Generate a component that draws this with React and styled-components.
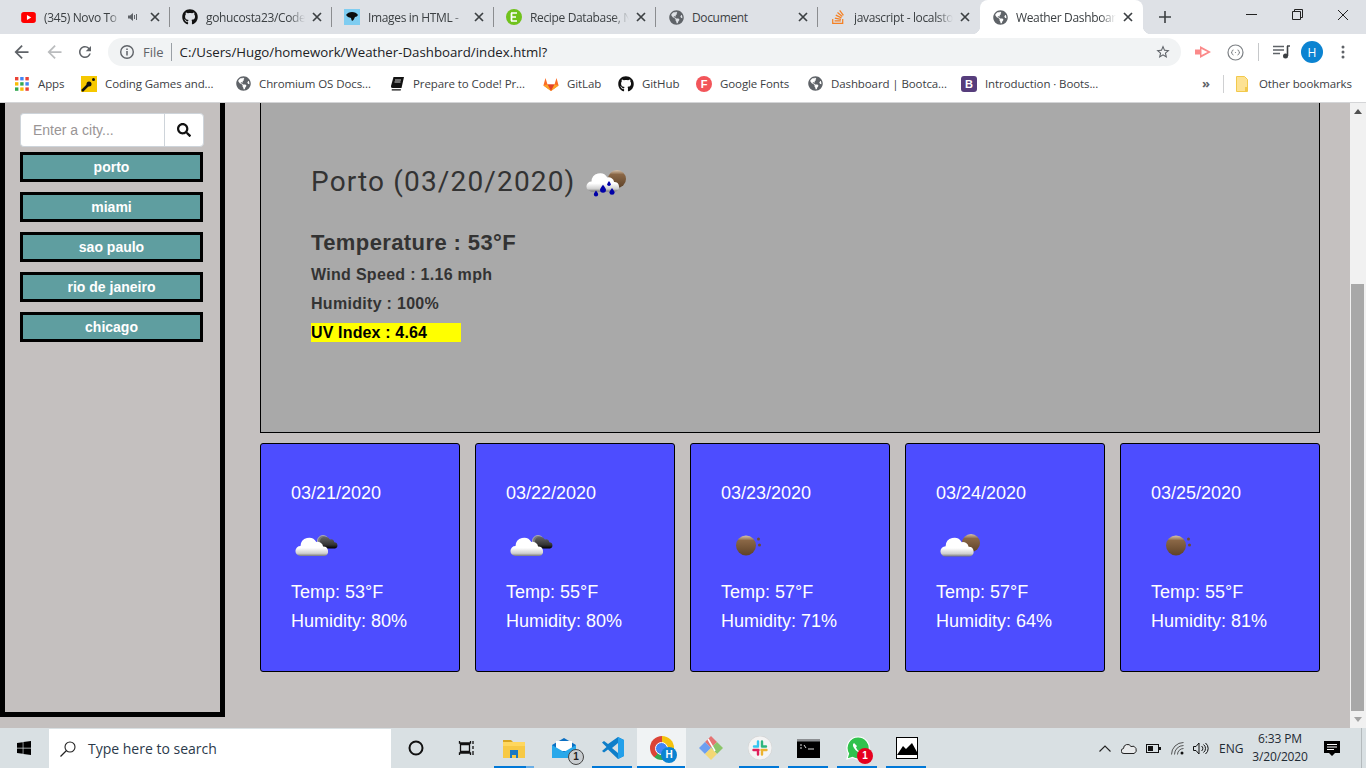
import React from 'react';
import styled, { createGlobalStyle } from 'styled-components';
import { FaGithub, FaStackOverflow, FaGlobeAmericas, FaSearch, FaWindows } from 'react-icons/fa';

const GlobalStyle = createGlobalStyle`
  html, body {
    margin: 0;
    padding: 0;
    overflow: hidden;
  }
  * { box-sizing: border-box; }
`;

const uiFont = `"Open Sans", "Noto Sans", sans-serif`;
const pageFont = `"Liberation Sans", Arial, sans-serif`;

const Screen = styled.div`
  width: 1366px;
  height: 768px;
  display: flex;
  flex-direction: column;
  overflow: hidden;
  font-family: ${uiFont};
`;

/* ---------- browser tabs ---------- */

const TabStrip = styled.div`
  height: 34px;
  flex: none;
  display: flex;
  padding-left: 8px;
  background: #dee1e6;
`;

const TabBox = styled.div`
  position: relative;
  width: ${({ $active }) => ($active ? '163px' : '162px')};
  height: 34px;
  display: flex;
  align-items: center;
  padding: 0 10px 0 12px;
  background: ${({ $active }) => ($active ? '#fff' : 'transparent')};
  border-radius: ${({ $active }) => ($active ? '8px 8px 0 0' : '0')};
  &::after {
    content: '';
    display: ${({ $sep }) => ($sep ? 'block' : 'none')};
    position: absolute;
    right: 0;
    top: 7px;
    width: 1px;
    height: 20px;
    background: #8b8d90;
  }
`;

const Flare = styled.span`
  position: absolute;
  bottom: 0;
  width: 8px;
  height: 8px;
  ${({ $side }) => ($side === 'left' ? 'left: -8px;' : 'right: -8px;')}
  background: radial-gradient(circle at ${({ $side }) => ($side === 'left' ? '0 0' : '100% 0')}, transparent 8px, #fff 8.5px);
`;

const TabIcon = styled.span`
  width: 16px;
  height: 16px;
  flex: none;
  display: flex;
  align-items: center;
  justify-content: center;
  margin-right: 8px;
`;

const TabTitle = styled.span`
  flex: 1;
  min-width: 0;
  margin-right: 7px;
  overflow: hidden;
  white-space: nowrap;
  font-size: 12px;
  color: #3c4043;
  letter-spacing: -0.35px;
  -webkit-mask-image: ${({ $fade }) => ($fade ? 'linear-gradient(to right, #000 84%, transparent 100%)' : 'none')};
  mask-image: ${({ $fade }) => ($fade ? 'linear-gradient(to right, #000 84%, transparent 100%)' : 'none')};
`;

const NewTab = styled.span`
  width: 20px;
  height: 34px;
  margin-left: 12px;
  display: flex;
  align-items: center;
  justify-content: center;
`;

const WindowButtons = styled.div`
  margin-left: auto;
  display: flex;
`;

const WindowButton = styled.span`
  width: 46px;
  height: 29px;
  display: flex;
  align-items: center;
  justify-content: center;
`;

/* ---------- toolbar ---------- */

const Toolbar = styled.div`
  height: 34px;
  flex: none;
  display: flex;
  align-items: center;
  background: #fff;
  padding: 2px 0 0 14px;
`;

const NavButton = styled.span`
  width: ${({ $w }) => $w}px;
  display: flex;
  align-items: center;
`;

const Omnibox = styled.div`
  width: 1073px;
  height: 28px;
  display: flex;
  align-items: center;
  padding: 0 10px 0 11px;
  border-radius: 14px;
  background: #f1f3f4;
`;

const FileLabel = styled.span`
  font-size: 13px;
  color: #5f6368;
  margin-left: 8px;
  padding-right: 7px;
  border-right: 1px solid #9aa0a6;
  line-height: 18px;
`;

const Url = styled.span`
  flex: 1;
  font-size: 13.25px;
  color: #202124;
  margin-left: 8px;
`;

const ToolIcons = styled.div`
  display: flex;
  align-items: center;
  margin-left: 14px;
`;

const ToolSlot = styled.span`
  width: ${({ $w }) => $w}px;
  display: flex;
  align-items: center;
  justify-content: ${({ $end }) => ($end ? 'flex-end' : 'flex-start')};
`;

const ToolDivider = styled.span`
  width: 1px;
  height: 18px;
  background: #c6c8ca;
  margin: 0 14px;
`;

const Avatar = styled.span`
  width: 22px;
  height: 22px;
  border-radius: 50%;
  background: #0b83d1;
  color: #fff;
  font-size: 12px;
  display: flex;
  align-items: center;
  justify-content: center;
`;

/* ---------- bookmarks ---------- */

const BookmarkBar = styled.div`
  height: 35px;
  flex: none;
  display: flex;
  align-items: center;
  padding: 0 0 3px 15px;
  background: #fff;
  border-bottom: 1px solid #d4d5d7;
`;

const Bookmark = styled.span`
  width: ${({ $w }) => $w}px;
  flex: none;
  display: flex;
  align-items: center;
  font-size: 11.5px;
  color: #3c4043;
  white-space: nowrap;
  letter-spacing: -0.1px;
`;

const BookmarkIcon = styled.span`
  width: 16px;
  height: 16px;
  flex: none;
  margin-right: ${({ $gap }) => $gap || 8}px;
  display: flex;
  align-items: center;
  justify-content: flex-start;
`;

const LetterIcon = styled.span`
  width: 16px;
  height: 16px;
  border-radius: ${({ $round }) => ($round ? '50%' : '3px')};
  background: ${({ $bg }) => $bg};
  color: #fff;
  font: bold 11px ${pageFont};
  display: flex;
  align-items: center;
  justify-content: center;
`;

const BarDivider = styled.span`
  width: 1px;
  height: 18px;
  margin: 0 12px 0 13px;
  background: #cfd0d2;
`;

const More = styled.span`
  font-size: 13px;
  font-weight: 700;
  color: #5f6368;
  margin-left: 81px;
  width: 8px;
  line-height: 1;
`;

/* ---------- the page ---------- */

const Viewport = styled.div`
  flex: 1;
  min-height: 0;
  display: flex;
  background: #c4c0bf;
  font-family: ${pageFont};
`;

const PageBody = styled.div`
  flex: 1;
  display: flex;
  align-items: flex-start;
`;

const Sidebar = styled.aside`
  width: 225px;
  height: 614px;
  flex: none;
  padding: 10px 16px 0 15px;
  border: 5px solid #000;
  border-top: 0;
`;

const SearchGroup = styled.div`
  width: 184px;
  height: 34px;
  display: flex;
  margin-bottom: 5px;
`;

const CityInput = styled.input`
  width: 144px;
  height: 34px;
  padding: 0 12px;
  border: 1px solid #ced4da;
  border-right: 0;
  border-radius: 4px 0 0 4px;
  background: #fff;
  font: 14px ${pageFont};
  outline: none;
  &::placeholder { color: #9a9595; opacity: 1; }
`;

const SearchButton = styled.button`
  width: 40px;
  height: 34px;
  padding: 0;
  border: 1px solid #ced4da;
  border-radius: 0 4px 4px 0;
  background: #fff;
  color: #111;
  display: flex;
  align-items: center;
  justify-content: center;
  font-size: 14px;
`;

const CityList = styled.div`
  display: flex;
  flex-direction: column;
  gap: 10px;
`;

const CityButton = styled.button`
  width: 183px;
  height: 30px;
  padding: 0;
  border: 3px solid #000;
  background: #5f9ea0;
  color: #fff;
  font: bold 14px ${pageFont};
`;

const Main = styled.main`
  width: 1060px;
  margin-left: 35px;
  display: flex;
  flex-direction: column;
  gap: 10px;
`;

const Current = styled.section`
  height: 330px;
  padding: 55px 0 0 50px;
  background: #a9a9a9;
  border: 1px solid #000;
  border-top: 0;
  color: #333;
`;

const CityTitle = styled.h2`
  margin: 0 0 22px;
  height: 50px;
  display: flex;
  align-items: center;
  font-family: Roboto, ${uiFont};
  font-size: 28px;
  font-weight: 400;
  letter-spacing: 1.15px;
  gap: 7px;
`;

const CityTitleText = styled.span`
  margin-bottom: 4px;
`;

const TempLine = styled.p`
  margin: 0 0 9px;
  font-size: 22px;
  line-height: 26px;
  font-weight: 700;
  letter-spacing: 0.4px;
`;

const StatLine = styled.p`
  margin: 0 0 10px;
  font-size: 16px;
  line-height: 19px;
  font-weight: 700;
  letter-spacing: 0.3px;
`;

const UvLine = styled.p`
  margin: 0;
  width: 150px;
  font-size: 16px;
  line-height: 19px;
  font-weight: 700;
  letter-spacing: 0.15px;
  color: #000;
  background: #ff0;
`;

const Forecast = styled.div`
  display: flex;
  gap: 15px;
`;

const DayCard = styled.article`
  width: 200px;
  height: 229px;
  padding: 37px 0 0 30px;
  background: #4d4dff;
  border: 1px solid #000;
  border-radius: 3px;
  color: #fff;
  font-size: 18px;
`;

const DayDate = styled.div`
  height: 24px;
  line-height: 24px;
  margin-bottom: 15px;
`;

const DayIcon = styled.div`
  height: 50px;
  margin-bottom: 8px;
`;

const DayText = styled.div`
  height: 29px;
  line-height: 29px;
`;

const Scrollbar = styled.div`
  width: 16px;
  flex: none;
  display: flex;
  flex-direction: column;
  background: #f1f1f1;
`;

const ScrollArrow = styled.span`
  height: 17px;
  flex: none;
  display: flex;
  align-items: center;
  justify-content: center;
`;

const ScrollGap = styled.span`
  flex: 1;
`;

const ScrollThumb = styled.span`
  height: 427px;
  flex: none;
  margin: 0 2px 0 1px;
  background: #a8a8a8;
`;

/* ---------- windows taskbar ---------- */

const Taskbar = styled.footer`
  height: 40px;
  flex: none;
  display: flex;
  align-items: center;
  background: #d9e0e3;
`;

const StartButton = styled.span`
  width: 49px;
  display: flex;
  justify-content: center;
  padding-right: 1px;
  color: #000;
  font-size: 16px;
`;

const SearchBox = styled.div`
  width: 342px;
  height: 39px;
  margin-top: 1px;
  display: flex;
  align-items: center;
  padding-left: 11px;
  background: #fff;
  font-size: 14px;
  color: #2b3a4a;
`;

const SearchText = styled.span`
  margin-left: 12px;
`;

const ShellSlot = styled.span`
  width: ${({ $w }) => $w}px;
  flex: none;
  display: flex;
  justify-content: center;
`;

const AppSlot = styled.span`
  position: relative;
  width: 49px;
  height: 40px;
  flex: none;
  display: flex;
  align-items: center;
  justify-content: center;
  background: ${({ $active }) => ($active ? '#f0f3f4' : 'transparent')};
  &::after {
    content: '';
    display: ${({ $on, $active }) => ($on || $active ? 'block' : 'none')};
    position: absolute;
    bottom: 0;
    left: ${({ $active }) => ($active ? '0' : '4px')};
    right: ${({ $active }) => ($active ? '1px' : '5px')};
    height: 2px;
    background: ${({ $stacked }) => ($stacked ? 'linear-gradient(to right, #0078d7 80%, #6aaee6 80%)' : '#0078d7')};
  }
`;

const AppBadge = styled.span`
  position: absolute;
  right: ${({ $right }) => $right}px;
  bottom: ${({ $bottom }) => $bottom}px;
  width: 16px;
  height: 16px;
  border-radius: 50%;
  background: ${({ $bg }) => $bg};
  color: ${({ $color }) => $color};
  border: ${({ $line }) => ($line ? '1px solid #444' : 'none')};
  font: 700 10px/16px ${pageFont};
  display: flex;
  align-items: center;
  justify-content: center;
`;

const ChromeBall = styled.span`
  width: 24px;
  height: 24px;
  border-radius: 50%;
  background: conic-gradient(#f4c20d 0 90deg, #34a853 90deg 220deg, #db4437 220deg 360deg);
  display: flex;
  align-items: center;
  justify-content: center;
  &::after {
    content: '';
    width: 11px;
    height: 11px;
    border-radius: 50%;
    background: #4285f4;
    border: 1.5px solid #fff;
  }
`;

const Tray = styled.div`
  margin-left: auto;
  height: 40px;
  display: flex;
  align-items: center;
  color: #1f2a33;
`;

const TraySlot = styled.span`
  width: ${({ $w }) => $w}px;
  flex: none;
  display: flex;
  justify-content: center;
`;

const TrayLang = styled.span`
  width: 30px;
  font-size: 12px;
  padding-left: 7px;
  white-space: nowrap;
`;

const Clock = styled.span`
  width: 76px;
  font-size: 12px;
  line-height: 18px;
  letter-spacing: -0.15px;
  text-align: center;
`;

const DesktopEdge = styled.span`
  width: 1px;
  height: 40px;
  margin: 0 4px 0 15px;
  background: #b4babd;
`;

/* ---------- drawn icons ---------- */

const Close = ({ size = 10, color = '#3c4043' }) => (
  <svg width={size} height={size} viewBox="0 0 10 10" style={{ flex: 'none' }}>
    <path d="M1 1l8 8M9 1l-8 8" stroke={color} strokeWidth="1.7" />
  </svg>
);

const Speaker = () => (
  <svg width="10" height="10" viewBox="0 0 10 10" style={{ flex: 'none', marginRight: 12 }}>
    <path d="M0 3.5h2L5 1v8L2 6.5H0z" fill="#5f6368" />
    <path d="M6.5 3v4M8.5 2v6" stroke="#5f6368" strokeWidth="1" />
  </svg>
);

const YouTube = () => (
  <svg width="15" height="11" viewBox="0 0 16 12">
    <rect width="16" height="12" rx="3" fill="#f00" />
    <path d="M6.3 3.3L11 6l-4.7 2.7z" fill="#fff" />
  </svg>
);

const PantherIcon = () => (
  <svg width="16" height="16" viewBox="0 0 16 16">
    <rect width="16" height="16" fill="#7fcdf1" />
    <path d="M2 6q2-3 6-3 4 0 6 3-1 2-3 2-1 3-3 4-1-2-1-3-3 0-5-3z" fill="#0c0c0c" />
  </svg>
);

const Edamam = () => (
  <svg width="16" height="16" viewBox="0 0 16 16">
    <circle cx="8" cy="8" r="8" fill="#70c21c" />
    <path d="M5 4h6M5 8h5M5 12h6M5.5 4v8" stroke="#fff" strokeWidth="1.7" fill="none" />
  </svg>
);

const Globe = ({ size = 15 }) => <FaGlobeAmericas size={size} color="#5f6368" />;

const Back = ({ color = '#5f6368' }) => (
  <svg width="15" height="14" viewBox="0 0 16 16">
    <path d="M16 7H3.8l5.6-5.6L8 0 0 8l8 8 1.4-1.4L3.8 9H16z" fill={color} />
  </svg>
);

const Reload = () => (
  <svg width="18" height="18" viewBox="0 0 24 24">
    <path d="M17.65 6.35A7.96 7.96 0 0012 4c-4.42 0-7.99 3.58-7.99 8s3.57 8 7.99 8c3.73 0 6.84-2.55 7.73-6h-2.08A5.99 5.99 0 0112 18c-3.31 0-6-2.69-6-6s2.69-6 6-6c1.66 0 3.14.69 4.22 1.78L13 11h7V4l-2.35 2.35z" fill="#5f6368" />
  </svg>
);

const Info = () => (
  <svg width="16" height="16" viewBox="0 0 16 16" style={{ flex: 'none' }}>
    <circle cx="8" cy="8" r="6.3" stroke="#5f6368" strokeWidth="1.4" fill="none" />
    <path d="M8 7v4.4M8 4.6v1.4" stroke="#5f6368" strokeWidth="1.5" />
  </svg>
);

const Star = () => (
  <svg width="16" height="16" viewBox="0 0 24 24" style={{ flex: 'none' }}>
    <path d="M22 9.24l-7.19-.62L12 2 9.19 8.63 2 9.24l5.46 4.73L5.82 21 12 17.27 18.18 21l-1.63-7.03L22 9.24zM12 15.4l-3.76 2.27 1-4.28-3.32-2.88 4.38-.38L12 6.1l1.71 4.04 4.38.38-3.32 2.88 1 4.28L12 15.4z" fill="#5f6368" />
  </svg>
);

const RedArrow = () => (
  <svg width="17" height="14" viewBox="0 0 17 14">
    <path d="M0 4.5h5V1l11 6-11 6V9.5H0z" fill="#fb8a8a" />
    <path d="M6.5 4l6 3-6 3z" fill="#fff" />
  </svg>
);

const CodeCircle = () => (
  <svg width="17" height="17" viewBox="0 0 17 17">
    <circle cx="8.5" cy="8.5" r="7.5" fill="none" stroke="#7d8185" strokeWidth="1.2" />
    <path d="M6.5 6Q5 6 5 7.5t-1 1q1 0 1 1T6.5 11M10.5 6Q12 6 12 7.5t1 1q-1 0-1 1t-1.5 1.5" fill="none" stroke="#7d8185" />
    <circle cx="8.5" cy="8.5" r=".6" fill="#7d8185" />
  </svg>
);

const QueueMusic = () => (
  <svg width="17" height="14" viewBox="0 0 17 14">
    <path d="M0 1.5h11M0 5h11M0 8.5h7" stroke="#5f6368" strokeWidth="1.3" />
    <path d="M14.5 1v10" stroke="#3c4043" strokeWidth="1.6" />
    <path d="M14 1h3" stroke="#3c4043" strokeWidth="1.4" />
    <circle cx="12.5" cy="11" r="2.5" fill="#3c4043" />
  </svg>
);

const Kebab = () => (
  <svg width="4" height="14" viewBox="0 0 4 14">
    <circle cx="2" cy="2" r="1.5" fill="#5f6368" />
    <circle cx="2" cy="7" r="1.5" fill="#5f6368" />
    <circle cx="2" cy="12" r="1.5" fill="#5f6368" />
  </svg>
);

const AppsGrid = () => {
  const colors = ['#ea4335', '#4285f4', '#ea4335', '#fbbc05', '#34a853', '#4285f4', '#34a853', '#fbbc05', '#ea4335'];
  return (
    <svg width="14" height="14" viewBox="0 0 14 14">
      {colors.map((c, i) => (
        <rect key={i} x={(i % 3) * 5.2} y={Math.floor(i / 3) * 5.2} width="3.4" height="3.4" fill={c} />
      ))}
    </svg>
  );
};

const CodingGames = () => (
  <svg width="16" height="16" viewBox="0 0 16 16">
    <rect width="16" height="16" fill="#f6c800" />
    <path d="M1 15l7-7" stroke="#111" strokeWidth="2.5" />
    <circle cx="8" cy="8" r="2.5" fill="#111" />
    <circle cx="12.5" cy="3.5" r="1.5" fill="#111" />
  </svg>
);

const BookIcon = () => (
  <svg width="14" height="14" viewBox="0 0 14 14">
    <path d="M3.5 0H14l-2.5 11H2.5Q.5 11 1 9z" fill="#111" />
    <path d="M2 12.2h9l-.3 1.3H2q-1-.6 0-1.3z" fill="#111" />
    <path d="M5 3h6M4.5 5h6" stroke="#fff" strokeWidth=".8" />
  </svg>
);

const GitlabFox = () => (
  <svg width="16" height="16" viewBox="0 0 16 16">
    <path d="M8 15L.4 9.5 2.5 2l2 6.5h7l2-6.5 2.1 7.5z" fill="#fc6d26" />
    <path d="M8 15L4.5 8.5h7z" fill="#e24329" />
    <path d="M8 15L.4 9.5l4.1-1zM8 15l7.6-5.5-4.1-1z" fill="#fca326" />
  </svg>
);

const Folder = () => (
  <svg width="12" height="16" viewBox="0 0 12 16">
    <path d="M.5.5h8l3 3v12H.5z" fill="#fde293" stroke="#f2c94c" />
    <rect x="9" y="11" width="3" height="4" fill="#f2c94c" />
  </svg>
);

const Cloud = ({ x = 0, y = 0, fill, scale = 1 }) => (
  <path
    transform={`translate(${x} ${y}) scale(${scale})`}
    d="M4 20a4.5 4.5 0 0 1 0-9a7.5 7.5 0 0 1 14-3.5a5 5 0 0 1 6 4a4.3 4.3 0 0 1 1 8.5z"
    fill={fill}
  />
);

const WeatherDefs = () => (
  <defs>
    <linearGradient id="wx-white" x1="0" y1="0" x2="0" y2="1">
      <stop offset="0.55" stopColor="#fff" />
      <stop offset="0.85" stopColor="#cfcfcf" />
      <stop offset="1" stopColor="#777" />
    </linearGradient>
    <linearGradient id="wx-dark" x1="0" y1="0" x2="0" y2="1">
      <stop offset="0" stopColor="#666" />
      <stop offset="0.7" stopColor="#333" />
      <stop offset="1" stopColor="#000" />
    </linearGradient>
    <linearGradient id="wx-sun" x1="0" y1="0" x2="0" y2="1">
      <stop offset="0" stopColor="#d8c4ae" />
      <stop offset="0.25" stopColor="#8a6746" />
      <stop offset="1" stopColor="#5e4228" />
    </linearGradient>
  </defs>
);

const Icon50 = ({ children }) => (
  <svg width="50" height="50" viewBox="0 0 50 50" style={{ flex: 'none', display: 'block' }}>
    <WeatherDefs />
    {children}
  </svg>
);

const NightCloud = () => (
  <Icon50>
    <circle cx="32" cy="21" r="5.5" fill="#777" stroke="#bbb" strokeWidth=".8" />
    <Cloud x={26} y={14} scale={0.72} fill="url(#wx-dark)" />
    <Cloud x={5} y={13.5} scale={1.13} fill="url(#wx-white)" />
  </Icon50>
);

const SunCloud = () => (
  <Icon50>
    <circle cx="35" cy="23" r="9" fill="url(#wx-sun)" />
    <Cloud x={5} y={13.5} scale={1.15} fill="url(#wx-white)" />
  </Icon50>
);

const PlainSun = () => (
  <Icon50>
    <circle cx="25" cy="25.5" r="10" fill="url(#wx-sun)" />
    <circle cx="37.5" cy="19" r="1.5" fill="#6c4d33" />
    <circle cx="38.5" cy="25" r="1.5" fill="#6c4d33" />
  </Icon50>
);

const Drop = ({ x, y, r }) => (
  <path d={`M${x} ${y - r * 1.6}Q${x + r} ${y - r * 0.3} ${x + r} ${y + 0.2}a${r} ${r} 0 0 1-${r * 2} 0Q${x - r} ${y - r * 0.3} ${x} ${y - r * 1.6}z`} fill="#0000a8" />
);

const RainCloud = () => (
  <Icon50>
    <circle cx="35" cy="21" r="9" fill="url(#wx-sun)" />
    <Cloud x={5} y={11} scale={1.13} fill="url(#wx-white)" />
    <Drop x={14} y={36} r={2.2} />
    <Drop x={21} y={31.5} r={3} />
    <Drop x={27} y={26} r={1.8} />
    <Drop x={30} y={34} r={2.5} />
  </Icon50>
);

const Explorer = () => (
  <svg width="23" height="19" viewBox="0 0 23 19">
    <path d="M0 1h8l2 2H0z" fill="#d9a520" />
    <rect y="3" width="22" height="16" fill="#ffd75e" />
    <rect y="7" width="22" height="12" fill="#f7c945" />
    <path d="M7 11h8v8h-2v-3H9v3H7z" fill="#1a78c2" />
  </svg>
);

const MailIcon = () => (
  <svg width="24" height="20" viewBox="0 0 24 20">
    <path d="M0 7L12 0l12 7v12H0z" fill="#0b6fc2" />
    <path d="M4 3h16v10H4z" fill="#fff" />
    <path d="M0 7l12 7 12-7v13H0z" fill="#28a8ea" />
  </svg>
);

const VsCode = () => (
  <svg width="24" height="24" viewBox="0 0 24 24">
    <path d="M17 1l6 3v16l-6 3-10-9.5-4 3-2-1.5 4.5-4L1 6.5 3 5l4 3z" fill="#0e7ec9" />
    <path d="M17 1l6 3v16l-6 3z" fill="#23a0ea" />
    <path d="M17 7l-6 5 6 5z" fill="#d9e0e3" />
  </svg>
);

const Diamond = () => (
  <svg width="24" height="24" viewBox="0 0 24 24">
    <path d="M12 0l6 6-6 6-6-6z" fill="#e57373" />
    <path d="M18 6l6 6-6 6-6-6z" fill="#8bc56a" />
    <path d="M6 6l6 6-6 6-6-6z" fill="#6d9ff0" />
    <path d="M12 12l6 6-6 6-6-6z" fill="#f3d774" />
    <path d="M9 3l7 12" stroke="#fff" strokeWidth="1.5" />
  </svg>
);

const SlackIcon = () => (
  <svg width="24" height="24" viewBox="0 0 24 24">
    <circle cx="12" cy="12" r="12" fill="#f4f4f4" stroke="#ccc" strokeWidth=".6" />
    <path d="M10 5.5v4M6 10.5h4" stroke="#36c5f0" strokeWidth="2.4" strokeLinecap="round" />
    <path d="M14 5.5v5M14 10.5h4" stroke="#2eb67d" strokeWidth="2.4" strokeLinecap="round" />
    <path d="M13.5 14h5M14 14v4.5" stroke="#ecb22e" strokeWidth="2.4" strokeLinecap="round" />
    <path d="M5.5 14h5M10 14v4.5" stroke="#e01e5a" strokeWidth="2.4" strokeLinecap="round" />
  </svg>
);

const CmdIcon = () => (
  <svg width="23" height="19" viewBox="0 0 23 19">
    <rect width="23" height="19" fill="#000" />
    <rect width="23" height="2.5" fill="#8c8f92" />
    <path d="M3 6h2M3 9h2M7 6l2 3M11 10h6" stroke="#ddd" strokeWidth="1" />
  </svg>
);

const WhatsApp = () => (
  <svg width="24" height="24" viewBox="0 0 24 24">
    <path d="M12 1a11 11 0 0 0-9.5 16.5L1 23l5.7-1.5A11 11 0 1 0 12 1z" fill="#31c24d" stroke="#fff" strokeWidth="1.2" />
    <path d="M8 7q-1.5 1-1 3 2 5 7 7 2 .5 3-1l-2.5-2-1.5 1q-2-1-3-3.5l1-1.5z" fill="#fff" />
  </svg>
);

const PhotoIcon = () => (
  <svg width="22" height="22" viewBox="0 0 22 22">
    <rect x=".5" y=".5" width="21" height="21" fill="#fff" stroke="#000" />
    <path d="M1 18l6-9 3 3 2-2 4-4 5 9v3H1z" fill="#000" />
  </svg>
);

const tabs = [
  { icon: <YouTube />, title: '(345) Novo To', audio: true },
  { icon: <FaGithub size={16} color="#111" />, title: 'gohucosta23/Code' },
  { icon: <PantherIcon />, title: 'Images in HTML - ' },
  { icon: <Edamam />, title: 'Recipe Database, N' },
  { icon: <Globe size={15} />, title: 'Document', plain: true },
  { icon: <FaStackOverflow size={16} color="#f48024" />, title: 'javascript - localsto', last: true },
];

const bookmarks = [
  { w: 66, icon: <AppsGrid />, label: 'Apps', gap: 7 },
  { w: 155, icon: <CodingGames />, label: 'Coding Games and...' },
  { w: 154, icon: <Globe />, label: 'Chromium OS Docs...', gap: 7 },
  { w: 153, icon: <BookIcon />, label: 'Prepare to Code! Pr...', gap: 7 },
  { w: 75, icon: <GitlabFox />, label: 'GitLab' },
  { w: 78, icon: <FaGithub size={16} color="#111" />, label: 'GitHub' },
  { w: 112, icon: <LetterIcon $bg="#f2555a" $round>F</LetterIcon>, label: 'Google Fonts' },
  { w: 153, icon: <Globe />, label: 'Dashboard | Bootca...', gap: 7 },
  { w: 160, icon: <LetterIcon $bg="#563d7c">B</LetterIcon>, label: 'Introduction · Boots...' },
];

const cities = ['porto', 'miami', 'sao paulo', 'rio de janeiro', 'chicago'];

const days = [
  { date: '03/21/2020', icon: <NightCloud />, temp: 53, humidity: 80 },
  { date: '03/22/2020', icon: <NightCloud />, temp: 55, humidity: 80 },
  { date: '03/23/2020', icon: <PlainSun />, temp: 57, humidity: 71 },
  { date: '03/24/2020', icon: <SunCloud />, temp: 57, humidity: 64 },
  { date: '03/25/2020', icon: <PlainSun />, temp: 55, humidity: 81 },
];

const App = () => (
  <Screen>
    <GlobalStyle />

    <TabStrip>
      {tabs.map((tab) => (
        <TabBox key={tab.title} $sep={!tab.last}>
          <TabIcon>{tab.icon}</TabIcon>
          <TabTitle $fade={!tab.plain}>{tab.title}</TabTitle>
          {tab.audio && <Speaker />}
          <Close />
        </TabBox>
      ))}
      <TabBox $active>
        <Flare $side="left" />
        <Flare $side="right" />
        <TabIcon><Globe /></TabIcon>
        <TabTitle $fade>Weather Dashboar</TabTitle>
        <Close />
      </TabBox>
      <NewTab>
        <svg width="12" height="12" viewBox="0 0 12 12"><path d="M6 0v12M0 6h12" stroke="#3c4043" strokeWidth="1.6" /></svg>
      </NewTab>
      <WindowButtons>
        <WindowButton>
          <svg width="11" height="1" viewBox="0 0 11 1"><path d="M0 .5h11" stroke="#222" /></svg>
        </WindowButton>
        <WindowButton>
          <svg width="11" height="11" viewBox="0 0 11 11"><path d="M.5 2.5h8v8h-8zM2.5 2.5v-2h8v8h-2" fill="none" stroke="#222" /></svg>
        </WindowButton>
        <WindowButton>
          <svg width="12" height="12" viewBox="0 0 12 12"><path d="M1 1l10 10M11 1L1 11" stroke="#222" /></svg>
        </WindowButton>
      </WindowButtons>
    </TabStrip>

    <Toolbar>
      <NavButton $w={33}><Back /></NavButton>
      <NavButton $w={29}><Back color="#babcbe" /></NavButton>
      <NavButton $w={32}><Reload /></NavButton>
      <Omnibox>
        <Info />
        <FileLabel>File</FileLabel>
        <Url>C:/Users/Hugo/homework/Weather-Dashboard/index.html?</Url>
        <Star />
      </Omnibox>
      <ToolIcons>
        <ToolSlot $w={32}><RedArrow /></ToolSlot>
        <ToolSlot $w={17}><CodeCircle /></ToolSlot>
        <ToolDivider />
        <ToolSlot $w={28}><QueueMusic /></ToolSlot>
        <Avatar>H</Avatar>
        <ToolSlot $w={22} $end><Kebab /></ToolSlot>
      </ToolIcons>
    </Toolbar>

    <BookmarkBar>
      {bookmarks.map((b) => (
        <Bookmark key={b.label} $w={b.w}>
          <BookmarkIcon $gap={b.gap}>{b.icon}</BookmarkIcon>
          {b.label}
        </Bookmark>
      ))}
      <More>»</More>
      <BarDivider />
      <Bookmark $w={110}>
        <BookmarkIcon $gap={7}><Folder /></BookmarkIcon>
        Other bookmarks
      </Bookmark>
    </BookmarkBar>

    <Viewport>
      <PageBody>
        <Sidebar>
          <SearchGroup>
            <CityInput placeholder="Enter a city..." />
            <SearchButton><FaSearch /></SearchButton>
          </SearchGroup>
          <CityList>
            {cities.map((city) => (
              <CityButton key={city}>{city}</CityButton>
            ))}
          </CityList>
        </Sidebar>

        <Main>
          <Current>
            <CityTitle>
              <CityTitleText>Porto (03/20/2020)</CityTitleText>
              <RainCloud />
            </CityTitle>
            <TempLine>Temperature : 53°F</TempLine>
            <StatLine>Wind Speed : 1.16 mph</StatLine>
            <StatLine>Humidity : 100%</StatLine>
            <UvLine>UV Index : 4.64</UvLine>
          </Current>

          <Forecast>
            {days.map((day) => (
              <DayCard key={day.date}>
                <DayDate>{day.date}</DayDate>
                <DayIcon>{day.icon}</DayIcon>
                <DayText>Temp: {day.temp}°F</DayText>
                <DayText>Humidity: {day.humidity}%</DayText>
              </DayCard>
            ))}
          </Forecast>
        </Main>
      </PageBody>

      <Scrollbar>
        <ScrollArrow>
          <svg width="8" height="5" viewBox="0 0 8 5"><path d="M0 5l4-5 4 5z" fill="#505050" /></svg>
        </ScrollArrow>
        <ScrollGap />
        <ScrollThumb />
        <ScrollArrow>
          <svg width="8" height="5" viewBox="0 0 8 5"><path d="M0 0l4 5 4-5z" fill="#a3a3a3" /></svg>
        </ScrollArrow>
      </Scrollbar>
    </Viewport>

    <Taskbar>
      <StartButton><FaWindows /></StartButton>
      <SearchBox>
        <svg width="16" height="16" viewBox="0 0 16 16"><circle cx="10" cy="6" r="5" fill="none" stroke="#222" strokeWidth="1.1" /><path d="M6.5 9.5L.5 15.5" stroke="#222" strokeWidth="1.2" /></svg>
        <SearchText>Type here to search</SearchText>
      </SearchBox>
      <ShellSlot $w={50}>
        <svg width="16" height="16" viewBox="0 0 16 16"><circle cx="8" cy="8" r="6.5" fill="none" stroke="#111" strokeWidth="2" /></svg>
      </ShellSlot>
      <ShellSlot $w={49}>
        <svg width="16" height="16" viewBox="0 0 16 16"><path d="M1.5 1v2h11V1M1.5 15v-2h11v2M2.5 4.5h9v7h-9zM15 1v3M15 6v3M15 11v4" fill="none" stroke="#111" strokeWidth="1.3" /></svg>
      </ShellSlot>
      <AppSlot $on $stacked><Explorer /></AppSlot>
      <AppSlot><MailIcon /><AppBadge $right={4} $bottom={3} $bg="#c9cdd0" $color="#222" $line>1</AppBadge></AppSlot>
      <AppSlot $on><VsCode /></AppSlot>
      <AppSlot $active><ChromeBall /><AppBadge $right={9} $bottom={5} $bg="#0b83d1" $color="#fff">H</AppBadge></AppSlot>
      <AppSlot><Diamond /></AppSlot>
      <AppSlot $on><SlackIcon /></AppSlot>
      <AppSlot $on><CmdIcon /></AppSlot>
      <AppSlot $on><WhatsApp /><AppBadge $right={9} $bottom={4} $bg="#e6001f" $color="#fff">1</AppBadge></AppSlot>
      <AppSlot $on><PhotoIcon /></AppSlot>

      <Tray>
        <TraySlot $w={24}>
          <svg width="12" height="7" viewBox="0 0 12 7"><path d="M.5 6.5L6 1l5.5 5.5" fill="none" stroke="#222" strokeWidth="1.1" /></svg>
        </TraySlot>
        <TraySlot $w={24}>
          <svg width="16" height="11" viewBox="0 0 16 11"><path d="M3 10.5a2.5 2.5 0 0 1-.5-5A4 4 0 0 1 10 3.5 3.5 3.5 0 0 1 13 10.5z" fill="#e8eaeb" stroke="#222" /></svg>
        </TraySlot>
        <TraySlot $w={24}>
          <svg width="15" height="9" viewBox="0 0 15 9"><rect x=".5" y=".5" width="12" height="8" fill="none" stroke="#111" /><rect x="2" y="2" width="5" height="5" fill="#111" /><rect x="13" y="3" width="2" height="3" fill="#111" /></svg>
        </TraySlot>
        <TraySlot $w={25}>
          <svg width="13" height="13" viewBox="0 0 13 13"><path d="M.5 12.5a12 12 0 0 1 12-12M3.5 12.5a9 9 0 0 1 9-9M6.5 12.5a6 6 0 0 1 6-6" fill="none" stroke="#444" strokeWidth=".9" /><circle cx="11" cy="11" r="1.5" fill="#111" /></svg>
        </TraySlot>
        <TraySlot $w={22}>
          <svg width="16" height="13" viewBox="0 0 16 13"><path d="M.5 4.5H3l3-3.5v11l-3-3.5H.5z" fill="none" stroke="#111" /><path d="M8.5 4a3 3 0 0 1 0 5M10.5 2.5a5 5 0 0 1 0 8M12.5 1a7 7 0 0 1 0 11" fill="none" stroke="#111" /></svg>
        </TraySlot>
        <TrayLang>ENG</TrayLang>
        <Clock>6:33 PM<br />3/20/2020</Clock>
        <TraySlot $w={28}>
          <svg width="16" height="15" viewBox="0 0 16 15"><path d="M0 0h16v12h-5l-3 3-3-3H0z" fill="#000" /><path d="M3 3.5h10M3 6h10M3 8.5h7" stroke="#fff" /></svg>
        </TraySlot>
        <DesktopEdge />
      </Tray>
    </Taskbar>
  </Screen>
);

export default App;
